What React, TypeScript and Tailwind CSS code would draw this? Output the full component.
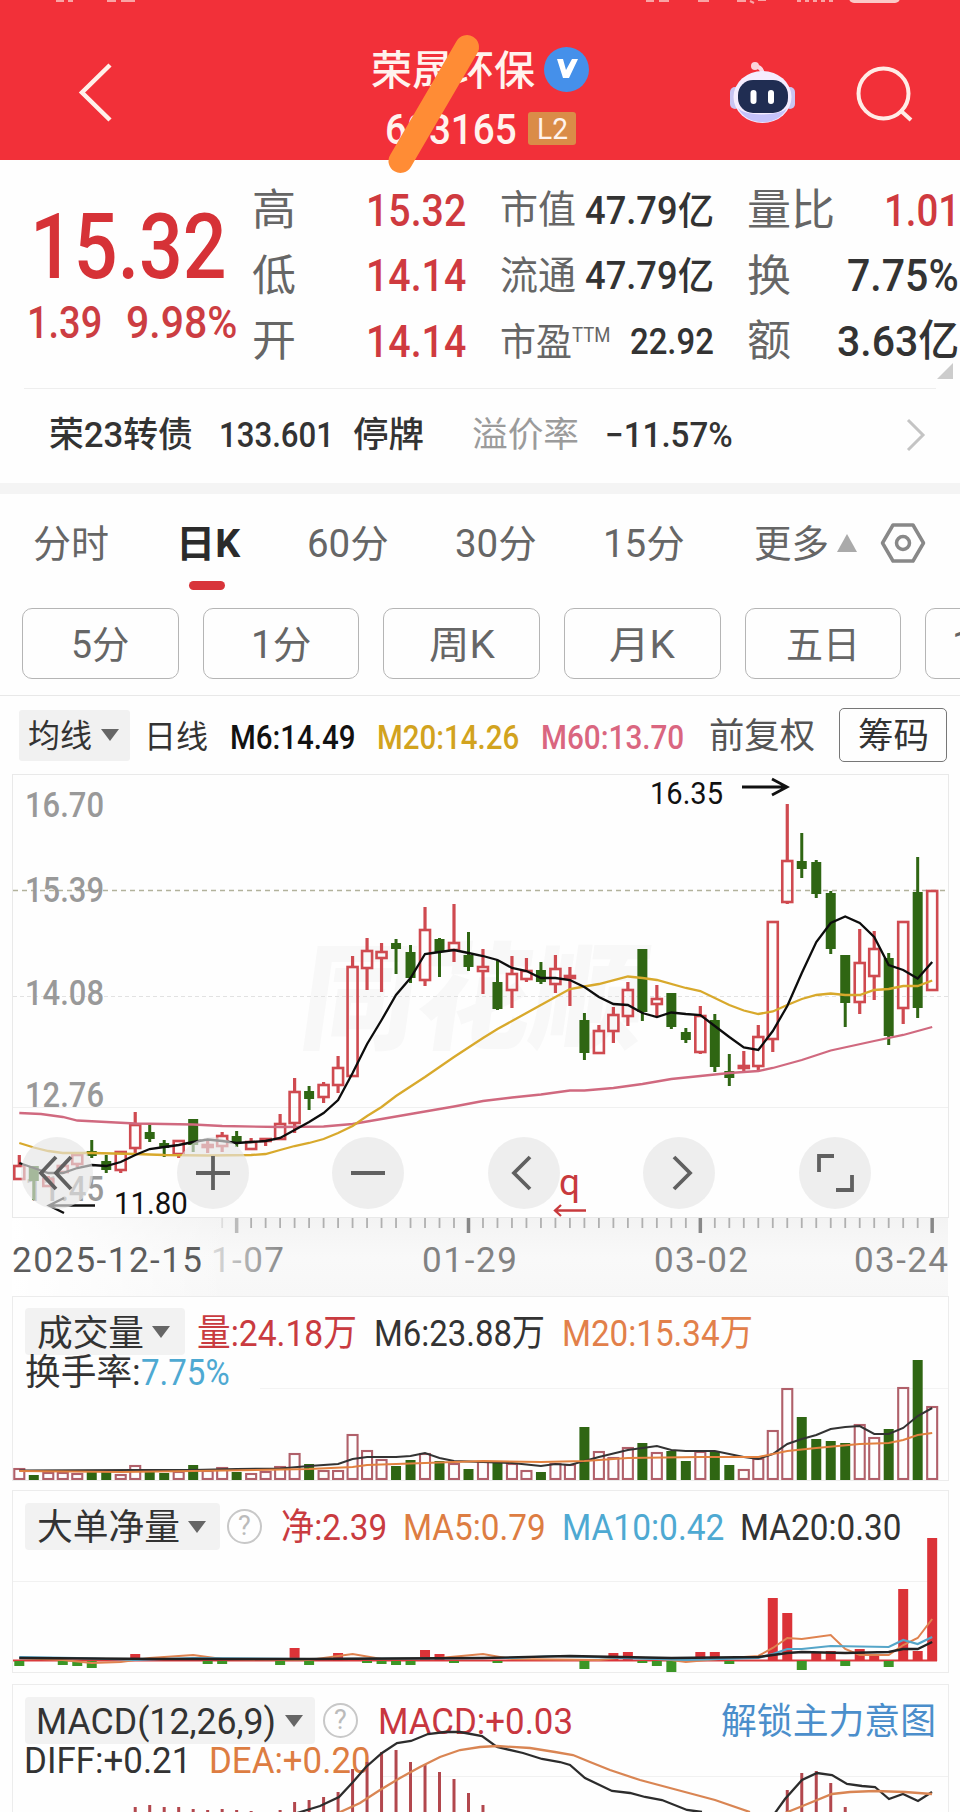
import React, { useLayoutEffect, useRef, useState } from 'react';

interface FitProps {
  children: React.ReactNode;
  className: string;
}

// Condenses a single line of text so it fills the width given by its class
const Fit: React.FC<FitProps> = ({ children, className }) => {
  const outer = useRef<HTMLSpanElement>(null);
  const inner = useRef<HTMLSpanElement>(null);
  const [scale, setScale] = useState(1);

  useLayoutEffect(() => {
    if (outer.current && inner.current) {
      setScale(outer.current.clientWidth / inner.current.offsetWidth);
    }
  }, [children]);

  return (
    <span ref={outer} className={`flex shrink-0 whitespace-nowrap leading-none ${className}`}>
      <span ref={inner} className="block shrink-0 origin-left pt-[2px]" style={{ transform: `scaleX(${scale})` }}>
        {children}
      </span>
    </span>
  );
};

const RED = '#cf4a50';
const GREEN = '#2f6613';
const STEP = 14.49;
const xAt = (i: number) => 19.3 + i * STEP;

// direction, high, low, body top, body bottom
type Candle = ['R' | 'G', number, number, number, number];
const candles: Candle[] = [
  ['R', 1155, 1179, 1166, 1179], ['G', 1166, 1200, 1166, 1181], ['R', 1176, 1187, 1179, 1186], ['R', 1164, 1174, 1166, 1172],
  ['R', 1153, 1167, 1155, 1164], ['G', 1140, 1158, 1151, 1156], ['G', 1155, 1173, 1161, 1170], ['R', 1151, 1173, 1152, 1170],
  ['R', 1112, 1153, 1125, 1148], ['G', 1125, 1142, 1132, 1139], ['G', 1140, 1157, 1143, 1148], ['R', 1141, 1158, 1141, 1154],
  ['G', 1119, 1152, 1119, 1145], ['R', 1140, 1153, 1145, 1147], ['R', 1132, 1152, 1136, 1146], ['G', 1131, 1147, 1136, 1143],
  ['R', 1138, 1149, 1142, 1149], ['R', 1138, 1146, 1139, 1141], ['R', 1114, 1140, 1124, 1139], ['R', 1078, 1133, 1092, 1123],
  ['G', 1086, 1110, 1091, 1099], ['R', 1082, 1103, 1085, 1097], ['R', 1056, 1093, 1068, 1085], ['R', 956, 1077, 967, 1076],
  ['R', 938, 990, 951, 968], ['R', 943, 992, 952, 958], ['G', 939, 974, 943, 949], ['G', 945, 983, 952, 978],
  ['R', 907, 986, 930, 980], ['G', 938, 977, 939, 952], ['R', 904, 962, 943, 950], ['G', 932, 971, 955, 967],
  ['R', 949, 994, 967, 971], ['G', 960, 1010, 982, 1009], ['R', 956, 1008, 974, 990], ['R', 958, 982, 971, 979],
  ['G', 962, 984, 970, 982], ['R', 955, 993, 969, 984], ['R', 967, 1006, 976, 978], ['G', 1013, 1060, 1020, 1053],
  ['R', 1025, 1054, 1031, 1053], ['R', 1007, 1043, 1015, 1031], ['R', 982, 1026, 990, 1016], ['G', 949, 1021, 949, 1012],
  ['R', 985, 1017, 999, 1004], ['G', 993, 1029, 993, 1027], ['G', 1028, 1043, 1032, 1040], ['R', 1006, 1054, 1016, 1052],
  ['G', 1014, 1072, 1020, 1067], ['G', 1054, 1086, 1071, 1078], ['R', 1051, 1072, 1066, 1068], ['R', 1025, 1070, 1037, 1066],
  ['R', 922, 1052, 922, 1039], ['R', 804, 904, 861, 902], ['G', 833, 878, 861, 869], ['G', 860, 898, 862, 894],
  ['G', 891, 954, 893, 949], ['G', 955, 1027, 955, 1003], ['R', 929, 1014, 963, 1002], ['R', 931, 1000, 949, 976],
  ['G', 953, 1045, 958, 1036], ['R', 921, 1024, 922, 1008], ['G', 857, 1018, 892, 1008], ['R', 891, 990, 891, 990],
];

const volumeTops = [
  1469, 1475, 1473, 1473, 1474, 1472, 1472, 1475, 1466, 1472, 1473, 1472, 1465, 1471, 1468, 1472, 1474, 1472, 1467, 1454, 1464, 1471,
  1471, 1435, 1451, 1460, 1466, 1460, 1454, 1461, 1464, 1469, 1462, 1461, 1464, 1471, 1472, 1464, 1465, 1427, 1452, 1458, 1448, 1443,
  1453, 1451, 1461, 1452, 1452, 1465, 1470, 1459, 1431, 1389, 1417, 1439, 1441, 1443, 1425, 1438, 1429, 1388, 1360, 1407,
];

// [index, y] – above the 1661 base line is an inflow, below it an outflow
const netBars: [number, number][] = [
  [0, 1666], [3, 1665], [4, 1666], [5, 1668], [8, 1654], [13, 1664], [14, 1664], [18, 1665], [19, 1648], [20, 1665], [22, 1653],
  [24, 1663], [25, 1664], [26, 1665], [27, 1665], [28, 1650], [29, 1654], [30, 1663], [33, 1663], [39, 1669], [41, 1653], [42, 1652],
  [43, 1663], [44, 1666], [45, 1672], [47, 1652], [48, 1652], [49, 1664], [52, 1598], [53, 1613], [54, 1670], [55, 1652], [56, 1651],
  [57, 1666], [58, 1649], [59, 1656], [60, 1667], [61, 1589], [62, 1651], [63, 1538],
];

const macdBars: [number, number][] = [
  [8, 1807], [9, 1805], [10, 1807], [11, 1807], [12, 1809], [13, 1810], [14, 1809], [15, 1810], [16, 1811], [18, 1810], [19, 1802],
  [20, 1800], [21, 1797], [22, 1792], [23, 1769], [24, 1762], [25, 1752], [26, 1750], [27, 1762], [28, 1764], [29, 1772], [30, 1779],
  [31, 1793], [32, 1805], [53, 1790], [54, 1773], [55, 1771], [56, 1783], [57, 1807],
];

const byIndex = (pts: number[][]) => pts.map(([i, y]) => `${xAt(i).toFixed(1)},${y}`).join(' ');

const ma6 = byIndex([
  [0, 1163], [1, 1168], [2, 1173], [3, 1173], [4, 1168], [5, 1165], [6, 1166], [7, 1162], [8, 1155], [9, 1149], [10, 1147], [11, 1145],
  [12, 1142], [13, 1139.5], [14, 1141], [15, 1143], [16, 1142], [17, 1141], [18, 1138], [19, 1130], [20, 1122], [21, 1113], [22, 1100],
  [23, 1073], [24, 1044], [25, 1020], [26, 995], [27, 978], [28, 954], [29, 952], [30, 950], [31, 953], [32, 956], [33, 960], [34, 968],
  [35, 971], [36, 978], [37, 978], [38, 980], [39, 987], [40, 997], [41, 1004], [42, 1005], [43, 1013], [44, 1017], [45, 1012.5],
  [46, 1014], [47, 1015], [48, 1026], [49, 1037], [50, 1047.5], [51, 1050], [52, 1031], [53, 1006], [54, 973], [55, 942], [56, 923],
  [57, 916.5], [58, 923], [59, 937], [60, 965], [61, 970], [62, 978.5], [63, 962],
]);
const ma20 = byIndex([
  [0, 1143], [1, 1147.5], [2, 1151], [3, 1153], [5, 1153], [8, 1154], [10, 1155], [13, 1155.5], [16, 1155], [17, 1154], [18, 1150],
  [19, 1146], [20, 1143], [21, 1139], [22, 1133], [23, 1126], [24, 1116], [25, 1107], [26, 1096], [28, 1077], [30, 1057], [32, 1038],
  [33, 1029], [34, 1021], [36, 1005], [38, 989], [39, 986.5], [40, 984], [42, 976.5], [43, 978], [44, 980], [46, 988], [47, 991],
  [49, 1005], [50, 1010.5], [51, 1014], [52, 1011.5], [53, 1005], [54, 999], [55, 995], [56, 993.5], [57, 995], [58, 995], [59, 990],
  [60, 989], [61, 986], [62, 986], [63, 980.5],
]);
const ma60 = byIndex([
  [0, 1113], [1.5, 1114], [3, 1117], [4, 1120.5], [8, 1123.5], [12, 1124.5], [14, 1126], [18, 1127], [21, 1126.5], [23, 1124],
  [25, 1119], [28, 1111.5], [30, 1106.5], [32, 1101], [34, 1097.5], [36, 1094.5], [38, 1090.5], [39, 1090.5], [41, 1088], [43, 1084],
  [45, 1079], [47, 1076], [49, 1073], [51, 1071], [52, 1068], [54, 1060], [56, 1050.5], [59, 1041], [61, 1035], [63, 1027],
]);
const vol6 = byIndex([
  [0, 1470.5], [8, 1470], [12, 1470], [15, 1469], [18, 1468.5], [20, 1466], [22, 1464], [23, 1459], [24, 1457], [26, 1457], [27, 1456],
  [28, 1453], [29, 1458], [30, 1461], [32, 1462], [34, 1463], [36, 1466], [37, 1464], [38, 1465], [39, 1461], [40, 1457], [42, 1450],
  [44, 1446], [45, 1450], [46, 1451], [48, 1451], [49, 1454], [50, 1457], [51, 1459], [52, 1454], [53, 1444], [54, 1439], [55, 1435],
  [56, 1429], [57, 1427], [58, 1426], [59, 1434], [60, 1434], [61, 1428], [62, 1416], [63, 1408],
]);
const vol20 = byIndex([
  [0, 1471], [7, 1472], [12, 1471], [20, 1469], [23, 1467], [24, 1465], [28, 1463], [32, 1461], [36, 1462], [39, 1461], [42, 1458],
  [47, 1457], [51, 1457], [53, 1451], [55, 1448], [58, 1444], [60, 1443], [61, 1440], [62, 1435], [63, 1433],
]);
const net20 = byIndex([[0, 1658], [10, 1659], [20, 1659], [32, 1658], [38, 1656], [45, 1658], [51, 1657], [52, 1655], [53, 1653], [54, 1652], [57, 1653], [60, 1652], [61, 1649], [62, 1649], [63, 1642]]);
const net10 = byIndex([[0, 1657], [4, 1658], [8, 1660], [12, 1658], [20, 1659], [34, 1658], [37, 1656], [46, 1660], [51, 1658], [52, 1654], [53, 1649], [54, 1649], [56, 1646], [60, 1647], [61, 1640], [62, 1644], [63, 1637]]);
const net5 = byIndex([[0, 1658], [3, 1660], [5, 1663], [7, 1662], [9, 1658], [12, 1655], [14, 1659], [20, 1660], [23, 1654], [25, 1659], [29, 1658], [32, 1654], [34, 1659], [40, 1660], [42, 1657], [45, 1660], [46, 1662], [49, 1658], [51, 1656], [52, 1648], [53, 1638], [54, 1639], [56, 1635], [57, 1649], [58, 1655], [60, 1655], [61, 1645], [62, 1638], [63, 1619]]);

const ArrowDown = () => (
  <svg className="block shrink-0" width="18" height="12" viewBox="0 0 18 12">
    <path d="M0 0h18L9 12z" fill="#666" />
  </svg>
);

const Help = () => (
  <span className="flex size-[35px] shrink-0 items-center justify-center rounded-full border-[2.5px] border-[#c8c8c8] text-[27px] leading-none text-[#bbb]">
    ?
  </span>
);

const Header = () => (
  <header className="relative flex h-[160px] bg-[#f23039] text-[#fff3ee]">
    <svg className="absolute inset-0" width="960" height="160" viewBox="0 0 960 160" fill="none">
      <path d="M56 1h8m4 0h5M107 1h9m5 0h14M646 1h8m5 0h10M698 1h11M737 1h9m4 0l4 2m4-3h8M797 1h4m4 0h4m4 0h4m4 0h4m4 0h4" stroke="#f9a5a5" strokeWidth="2" />
      <rect x="849" y="-12" width="51" height="15" rx="5" fill="#fbc9c7" />
      <path d="M110 65L82 92.500L110 120" stroke="#fff0ea" strokeWidth="4.500" />
      <ellipse cx="883.500" cy="93.500" rx="25" ry="25" stroke="#ffece6" strokeWidth="4" />
      <path d="M900 110l11 10" stroke="#ffece6" strokeWidth="4" />
      {/* assistant robot */}
      <path d="M763 74c-1-5-3-7-7-8" stroke="#fbd9e4" strokeWidth="4" strokeLinecap="round" />
      <circle cx="755" cy="66" r="4" fill="#fbd5dc" />
      <rect x="730" y="87" width="10" height="22" rx="5" fill="#c9c5f2" />
      <rect x="785" y="87" width="10" height="22" rx="5" fill="#c9c5f2" />
      <ellipse cx="762.500" cy="97" rx="29" ry="26" fill="#f5edff" />
      <path d="M738 108c8 18 40 20 49 0-6 8-42 9-49 0z" fill="#c5c3fa" />
      <rect x="738" y="80" width="50" height="33" rx="15" fill="#202d52" />
      <rect x="750.500" y="90" width="6" height="14" rx="3" fill="#fff" />
      <rect x="768" y="90" width="6" height="14" rx="3" fill="#fff" />
    </svg>
    <div className="ml-[371px] flex flex-col">
      <div className="mt-[46px] flex h-[46px] items-center">
        <Fit className="w-[164px] pt-[3px] text-[41px] font-medium">荣晟环保</Fit>
        <span className="ml-[9px] flex size-[45px] items-center justify-center rounded-full bg-[#4590ea]">
          <svg width="24" height="22" viewBox="0 0 24 22">
            <path d="M2 1h6l3 11L17 1h6l-9 19H8z" fill="#fff" />
          </svg>
        </span>
      </div>
      <div className="mt-[13px] ml-[14px] flex h-[46px] items-center">
        <Fit className="w-[132px] text-[43px] font-medium">603165</Fit>
        <span className="ml-[11px] flex h-[33px] w-[48px] items-center justify-center rounded-[3px] bg-[#da8c48]">
          <Fit className="w-[31px] text-[29px]">L2</Fit>
        </span>
      </div>
    </div>
    <svg className="absolute top-0 left-[380px] z-10" width="110" height="180" viewBox="380 0 110 180">
      <path d="M467 47L400.500 161" stroke="#ff8c35" strokeWidth="24" strokeLinecap="round" />
    </svg>
  </header>
);

const Quote = () => (
  <section className="relative flex h-[228px] text-[#333]">
    <div className="w-[252px] shrink-0 pt-[41px] font-medium text-[#d63237]">
      <Fit className="ml-[30px] h-[90px] w-[197px] text-[90px]">15.32</Fit>
      <div className="mt-[7px] flex">
        <Fit className="ml-[27px] h-[46px] w-[75px] text-[45px] text-[#cc3d42]">1.39</Fit>
        <Fit className="ml-[24px] h-[46px] w-[111px] text-[45px] text-[#cc3d42]">9.98%</Fit>
      </div>
    </div>
    <div className="flex w-[248px] shrink-0 flex-col pt-[17px]">
      {[['高', '15.32'], ['低', '14.14'], ['开', '14.14']].map(([label, value]) => (
        <div key={label} className="flex h-[65.500px] items-center">
          <Fit className="w-[44px] text-[43px] text-[#666]">{label}</Fit>
          <Fit className="ml-[70px] w-[100px] text-[44px] font-medium text-[#cf3a3f]">{value}</Fit>
        </div>
      ))}
    </div>
    <div className="flex w-[247px] shrink-0 flex-col pt-[17px]">
      {[['市值', '47.79亿'], ['流通', '47.79亿']].map(([label, value]) => (
        <div key={label} className="flex h-[65.500px] items-center">
          <Fit className="w-[76px] text-[39px] text-[#666]">{label}</Fit>
          <Fit className="ml-[9px] w-[129px] text-[38px] font-medium">{value}</Fit>
        </div>
      ))}
      <div className="flex h-[65.500px] items-center">
        <Fit className="w-[72px] text-[38px] text-[#666]">市盈</Fit>
        <Fit className="mb-[14px] w-[38px] text-[20px] text-[#666]">TTM</Fit>
        <Fit className="ml-[20px] w-[84px] text-[36px] font-medium">22.92</Fit>
      </div>
    </div>
    <div className="flex shrink-0 flex-col pt-[17px]">
      <div className="flex h-[65.500px] items-center">
        <Fit className="w-[88px] text-[43px] text-[#666]">量比</Fit>
        <Fit className="ml-[49px] w-[76px] text-[44px] font-medium text-[#cf3a3f]">1.01</Fit>
      </div>
      <div className="flex h-[65.500px] items-center">
        <Fit className="w-[44px] text-[43px] text-[#666]">换</Fit>
        <Fit className="ml-[56px] w-[112px] text-[44px] font-medium">7.75%</Fit>
      </div>
      <div className="flex h-[65.500px] items-center">
        <Fit className="w-[44px] text-[43px] text-[#666]">额</Fit>
        <Fit className="ml-[46px] w-[122px] text-[43px] font-medium">3.63亿</Fit>
      </div>
    </div>
    <svg className="absolute right-[7px] bottom-[9px]" width="16" height="16" viewBox="0 0 16 16">
      <path d="M16 0v16H0z" fill="#ccc" />
    </svg>
  </section>
);

const Bond = () => (
  <section>
    <div className="mx-[24px] h-px bg-[#eee]" />
    <div className="flex h-[94px] items-center pb-[3px] text-[#333]">
      <Fit className="ml-[49px] w-[144px] text-[35px] font-medium">荣23转债</Fit>
      <Fit className="ml-[26px] w-[115px] text-[35px] font-medium">133.601</Fit>
      <Fit className="ml-[19px] w-[71px] text-[35px] font-medium">停牌</Fit>
      <Fit className="ml-[48px] w-[107px] text-[35px] text-[#9b9b9b]">溢价率</Fit>
      <Fit className="ml-[26px] w-[128px] text-[35px] font-medium">−11.57%</Fit>
      <svg className="ml-[172px]" width="22" height="34" viewBox="0 0 22 34" fill="none">
        <path d="M3 2l15 15L3 32" stroke="#c4c4c4" strokeWidth="3" />
      </svg>
    </div>
    <div className="h-[11px] bg-[#f4f4f4]" />
  </section>
);

const Tabs = () => (
  <nav className="flex h-[114px] items-start pt-[24px] text-[#666]">
    <Fit className="mt-[5px] ml-[33px] w-[76px] text-[38px]">分时</Fit>
    <div className="ml-[67px] mt-[5px] flex w-[64px] flex-col items-center text-[#2b2b2b]">
      <Fit className="w-[64px] text-[38px] font-bold">日K</Fit>
      <span className="mt-[18px] mr-[2px] h-[9px] w-[36px] rounded-full bg-[#d8343a]" />
    </div>
    <Fit className="mt-[5px] ml-[67px] w-[82px] text-[38px]">60分</Fit>
    <Fit className="mt-[5px] ml-[66px] w-[82px] text-[38px]">30分</Fit>
    <Fit className="mt-[5px] ml-[66px] w-[82px] text-[38px]">15分</Fit>
    <Fit className="mt-[5px] ml-[69px] w-[75px] text-[38px]">更多</Fit>
    <svg className="mt-[16px] ml-[8px]" width="20" height="18" viewBox="0 0 20 18">
      <path d="M10 0l10 18H0z" fill="#aaa" />
    </svg>
    <svg className="mt-[4px] ml-[23px]" width="46" height="42" viewBox="0 0 46 42" fill="none" stroke="#888" strokeWidth="3.500">
      <path d="M13 3h20l10.500 18L33 39H13L2.500 21z" strokeLinejoin="round" />
      <circle cx="23" cy="21" r="6.500" />
    </svg>
  </nav>
);

const Periods = () => (
  <div className="flex h-[87px] gap-[24px] overflow-hidden pl-[22px] text-[#666]">
    {[
      ['5分', 'w-[58px]'],
      ['1分', 'w-[60px]'],
      ['周K', 'w-[66px]'],
      ['月K', 'w-[66px]'],
      ['五日', 'w-[74px]'],
      ['120分', 'w-[104px]'],
    ].map(([label, width]) => (
      <div key={label} className="flex h-[71px] w-[156.700px] shrink-0 items-center justify-center rounded-[10px] border-[1.500px] border-[#b5b5b5]">
        <Fit className={`${width} text-[38px]`}>{label}</Fit>
      </div>
    ))}
  </div>
);

const AverageRow = () => (
  <div className="flex h-[79px] items-center border-t-[1.500px] border-[#e8e8e8] text-[#333]">
    <div className="ml-[19px] flex h-[51px] w-[111px] shrink-0 items-center rounded-[3px] bg-[#f1f1f1] pl-[9px]">
      <Fit className="w-[64px] text-[32px]">均线</Fit>
      <span className="ml-[9px]"><ArrowDown /></span>
    </div>
    <Fit className="ml-[14px] w-[64px] pt-[2px] text-[32px]">日线</Fit>
    <Fit className="ml-[22px] w-[126px] pt-[2px] text-[33px] font-medium text-[#111]">M6:14.49</Fit>
    <Fit className="ml-[21px] w-[142px] pt-[2px] text-[33px] font-medium text-[#d2a31e]">M20:14.26</Fit>
    <Fit className="ml-[22px] w-[143px] pt-[2px] text-[33px] font-medium text-[#da6680]">M60:13.70</Fit>
    <Fit className="ml-[25px] w-[106px] text-[35px] text-[#555]">前复权</Fit>
    <span className="ml-[24px] flex h-[54px] w-[108px] shrink-0 items-center justify-center rounded-[5px] border-[1.500px] border-[#777]">
      <Fit className="w-[71px] text-[35px]">筹码</Fit>
    </span>
  </div>
);

const toolIcons = [
  'M35 20L20 36L35 52M50 20L35 36L50 52',
  'M19 36H53M36 19V53',
  'M19 36H53',
  'M42 20L26 36L42 52',
  'M31 20L47 36L31 52',
  'M35 19H20V35M37 53H53V38',
];

const PriceChart = () => (
  <section className="relative ml-[12px] h-[444px] w-[937px] border border-[#e9e9e9]">
    <svg className="absolute inset-0" width="935" height="442" viewBox="13 775 935 442" fill="none">
      <text x="298" y="1040" fontSize="116" fontWeight="900" textLength="345" lengthAdjust="spacingAndGlyphs" transform="skewX(-8)" className="translate-x-[145px]" fill="#f8f8f8">同花顺</text>
      <path d="M13 890.500H948" stroke="#b2b29c" strokeDasharray="5 4" strokeWidth="1.300" />
      <path d="M13 996.500H948" stroke="#e2e2e2" strokeDasharray="4 3" />
      <path d="M13 1107.500H948" stroke="#f0f0f0" />
      {[['16.70', 817], ['15.39', 902], ['14.08', 1005], ['12.76', 1107], ['11.45', 1201]].map(([label, y]) => (
        <text key={label} x="25" y={y} fontSize="35" fontWeight="500" textLength="79" lengthAdjust="spacingAndGlyphs" fill="#999">{label}</text>
      ))}
      {candles.map(([dir, high, low, top, bottom], i) => {
        const x = xAt(i);
        return dir === 'R' ? (
          <g key={i} stroke={RED}>
            <path d={`M${x} ${high}V${top}M${x} ${bottom}V${low}`} strokeWidth="3.200" />
            <rect x={x - 5} y={top} width="10" height={bottom - top} strokeWidth="2.600" />
          </g>
        ) : (
          <g key={i}>
            <path d={`M${x} ${high}V${low}`} stroke={GREEN} strokeWidth="3" />
            <rect x={x - 5} y={top} width="10" height={bottom - top} fill={GREEN} />
          </g>
        );
      })}
      <polyline points={ma60} stroke="#d0697f" strokeWidth="2.300" />
      <polyline points={ma20} stroke="#d8a92c" strokeWidth="2.300" />
      <polyline points={ma6} stroke="#0d0d0d" strokeWidth="2.300" />
      <text x="650" y="804" fontSize="31" textLength="73" lengthAdjust="spacingAndGlyphs" fill="#111">16.35</text>
      <path d="M742 787H787M772 779L787 787L772 795" stroke="#111" strokeWidth="2.800" />
      <path d="M95 1205.500H49M64 1198L49 1205.500L64 1213" stroke="#111" strokeWidth="2.500" />
      <text x="559" y="1195" fontSize="37" fill="#c83a3d">q</text>
      <path d="M586 1210.500H555M561 1205L555 1210.500L561 1216" stroke="#c83a3d" strokeWidth="2.300" />
    </svg>
    <div className="absolute top-[362px] left-[8px] flex gap-[83.500px]">
      {toolIcons.map((d) => (
        <button key={d} className="size-[72px] rounded-full bg-[#e5e5e5]/65">
          <svg width="72" height="72" viewBox="0 0 72 72" fill="none">
            <path d={d} stroke="#606060" strokeWidth="3.800" />
          </svg>
        </button>
      ))}
    </div>
    <div className="absolute top-[411px] left-[101px] text-[31px] text-[#111]">
      <Fit className="w-[74px]">11.80</Fit>
    </div>
  </section>
);

const TimeAxis = () => (
  <svg className="block" width="960" height="78" viewBox="0 1218 960 78">
    <defs>
      <linearGradient id="band" x1="0" x2="0" y1="0" y2="1">
        <stop offset="0" stopColor="#f3f3f3" />
        <stop offset="0.5" stopColor="#f9f9f9" />
        <stop offset="1" stopColor="#f7f7f7" />
      </linearGradient>
      <linearGradient id="fade" gradientUnits="userSpaceOnUse" x1="205" x2="285" y1="0" y2="0">
        <stop offset="0" stopColor="#e5e5e5" />
        <stop offset="0.6" stopColor="#a8a8a8" />
        <stop offset="1" stopColor="#888" />
      </linearGradient>
      <linearGradient id="side" x1="0" x2="1" y1="0" y2="0">
        <stop offset="0" stopColor="#fff" />
        <stop offset="1" stopColor="#fff" stopOpacity="0" />
      </linearGradient>
    </defs>
    <rect x="12" y="1218" width="936" height="78" fill="url(#band)" />
    <rect x="12" y="1218" width="220" height="78" fill="url(#side)" />
    {Array.from({ length: 50 }, (_, k) => k + 14).map((i) => {
      const major = i % 16 === 15;
      return (
        <path
          key={i}
          d={`M${xAt(i)} 1218v${major ? 15 : 10}`}
          stroke={i === 14 ? '#ddd' : i === 15 ? '#bbb' : major ? '#888' : '#b0b0b0'}
          strokeWidth={major ? 3.5 : 1.8}
        />
      );
    })}
    <g fontSize="35" fill="#828282">
      <text x="12" y="1272" textLength="190" fill="#5c5c5c">2025-12-15</text>
      <text x="211" y="1272" textLength="73" fill="url(#fade)">1-07</text>
      <text x="422" y="1272" textLength="95">01-29</text>
      <text x="654" y="1272" textLength="94">03-02</text>
      <text x="854" y="1272" textLength="94">03-24</text>
    </g>
  </svg>
);

const VolumeChart = () => (
  <section className="relative mb-[9px] ml-[12px] h-[185px] w-[937px] border border-[#ececec] pt-[11px] text-[37px] text-[#333]">
    <div className="flex h-[47px] items-center">
      <div className="ml-[12px] flex h-[47px] w-[160px] items-center rounded-[4px] bg-[#f2f2f2] pl-[12px]">
        <Fit className="w-[107px] pt-[2px] text-[36px]">成交量</Fit>
        <span className="ml-[8px]"><ArrowDown /></span>
      </div>
      <Fit className="ml-[12px] w-[160px] pt-[2px] text-[#c93b40]">量:24.18万</Fit>
      <Fit className="ml-[17px] w-[171px] pt-[2px]">M6:23.88万</Fit>
      <Fit className="ml-[17px] w-[191px] pt-[2px] text-[#e2804a]">M20:15.34万</Fit>
    </div>
    <div className="flex h-[34px] items-center">
      <Fit className="ml-[12px] w-[116px] text-[36px]">换手率:</Fit>
      <Fit className="w-[89px] text-[36px] text-[#4ea9d2]">7.75%</Fit>
    </div>
    <svg className="absolute inset-0" width="935" height="183" viewBox="13 1297 935 183" fill="none">
      <path d="M260 1388.500H948" stroke="#f3f3f3" />
      {volumeTops.map((top, i) =>
        candles[i][0] === 'R' ? (
          <rect key={i} x={xAt(i) - 5} y={top} width="10" height={1479 - top} stroke="#b0606a" strokeWidth="2.100" />
        ) : (
          <rect key={i} x={xAt(i) - 5} y={top} width="10" height={1480 - top} fill={GREEN} />
        ),
      )}
      <polyline points={vol6} stroke="#333" strokeWidth="2" />
      <polyline points={vol20} stroke="#e2813f" strokeWidth="2" />
    </svg>
  </section>
);

const NetChart = () => (
  <section className="relative mb-[11px] ml-[12px] h-[183px] w-[937px] border border-[#ececec] pt-[12px] text-[37px] text-[#333]">
    <div className="flex h-[47px] items-center">
      <div className="ml-[12px] flex h-[47px] w-[195px] shrink-0 items-center rounded-[4px] bg-[#f2f2f2] pl-[12px]">
        <Fit className="w-[143px] text-[36px]">大单净量</Fit>
        <span className="ml-[8px]"><ArrowDown /></span>
      </div>
      <span className="ml-[7px]"><Help /></span>
      <Fit className="ml-[19px] w-[106px] text-[#c93b40]">净:2.39</Fit>
      <Fit className="ml-[16px] w-[143px] text-[#dd7d42]">MA5:0.79</Fit>
      <Fit className="ml-[16px] w-[162px] text-[#4ea9d2]">MA10:0.42</Fit>
      <Fit className="ml-[16px] w-[161px]">MA20:0.30</Fit>
    </div>
    <svg className="absolute inset-0" width="935" height="181" viewBox="13 1491 935 181" fill="none">
      <path d="M13 1581.500H935" stroke="#f1f1f1" />
      <path d="M13 1660.500H937" stroke="#d93a3c" strokeWidth="2" />
      {netBars.map(([i, y]) =>
        y < 1661 ? (
          <rect key={i} x={xAt(i) - 5} y={y} width="10" height={1661 - y} fill="#db3338" />
        ) : (
          <rect key={i} x={xAt(i) - 5} y="1661" width="10" height={y - 1661} fill="#3c9626" />
        ),
      )}
      <polyline points={net5} stroke="#df8350" strokeWidth="2" />
      <polyline points={net10} stroke="#55a5c8" strokeWidth="2.200" />
      <polyline points={net20} stroke="#222" strokeWidth="2.400" />
    </svg>
  </section>
);

const MacdChart = () => (
  <section className="relative ml-[12px] h-[200px] w-[937px] border border-[#ececec] pt-[12px] text-[37px] text-[#333]">
    <div className="flex h-[47px] items-center">
      <div className="ml-[12px] flex h-[47px] w-[290px] shrink-0 items-center rounded-[4px] bg-[#f2f2f2] pl-[11px]">
        <Fit className="w-[240px]">MACD(12,26,9)</Fit>
        <span className="ml-[9px]"><ArrowDown /></span>
      </div>
      <span className="ml-[8px]"><Help /></span>
      <Fit className="ml-[20px] w-[195px] text-[#c8363f]">MACD:+0.03</Fit>
      <Fit className="ml-[148px] w-[215px] text-[36px] text-[#4b8ecb]">解锁主力意图</Fit>
    </div>
    <div className="flex h-[34px] items-center pb-[4px]">
      <Fit className="ml-[11px] w-[167px]">DIFF:+0.21</Fit>
      <Fit className="ml-[18px] w-[162px] text-[#dd7d42]">DEA:+0.20</Fit>
    </div>
    <svg className="absolute inset-0" width="935" height="127" viewBox="13 1685 935 127" fill="none">
      <path d="M380 1776.500H948" stroke="#f1f1f1" />
      {macdBars.map(([i, y]) => (
        <path key={i} d={`M${xAt(i)} ${y}V1812`} stroke="#b2474d" strokeWidth="3" />
      ))}
      <polyline points="297,1813 320,1806 339,1797 353,1782 366,1767 382,1753 397,1743 411,1741 428,1734 445,1732 460,1732 482,1736 497,1747 523,1753 542,1759 560,1762 570,1765 585,1778 612,1791 630,1793 645,1797 662,1800 687,1810 702,1812" stroke="#2c2c2c" strokeWidth="2.300" />
      <polyline points="775,1813 785,1799 802,1780 817,1773 832,1775 847,1784 862,1786 875,1787 889,1799 903,1794 918,1801 932,1792" stroke="#2c2c2c" strokeWidth="2.300" />
      <polyline points="338,1813 360,1803 380,1790 400,1778 420,1767 440,1757 460,1750 480,1747 497,1746 530,1748 555,1752 573,1755 590,1762 610,1770 640,1780 685,1792 715,1800 750,1812" stroke="#d98553" strokeWidth="2.300" />
      <polyline points="785,1813 800,1807 832,1794 850,1792 875,1791 905,1792 932,1794" stroke="#d98553" strokeWidth="2.300" />
    </svg>
  </section>
);

const App: React.FC = () => {
  return (
    <div className="h-[1812px] w-[960px] overflow-hidden bg-[#fefefe] font-['Roboto','Noto_Sans_CJK_SC',sans-serif]">
      <Header />
      <Quote />
      <Bond />
      <Tabs />
      <Periods />
      <AverageRow />
      <PriceChart />
      <TimeAxis />
      <VolumeChart />
      <NetChart />
      <MacdChart />
    </div>
  );
};

export default App;
